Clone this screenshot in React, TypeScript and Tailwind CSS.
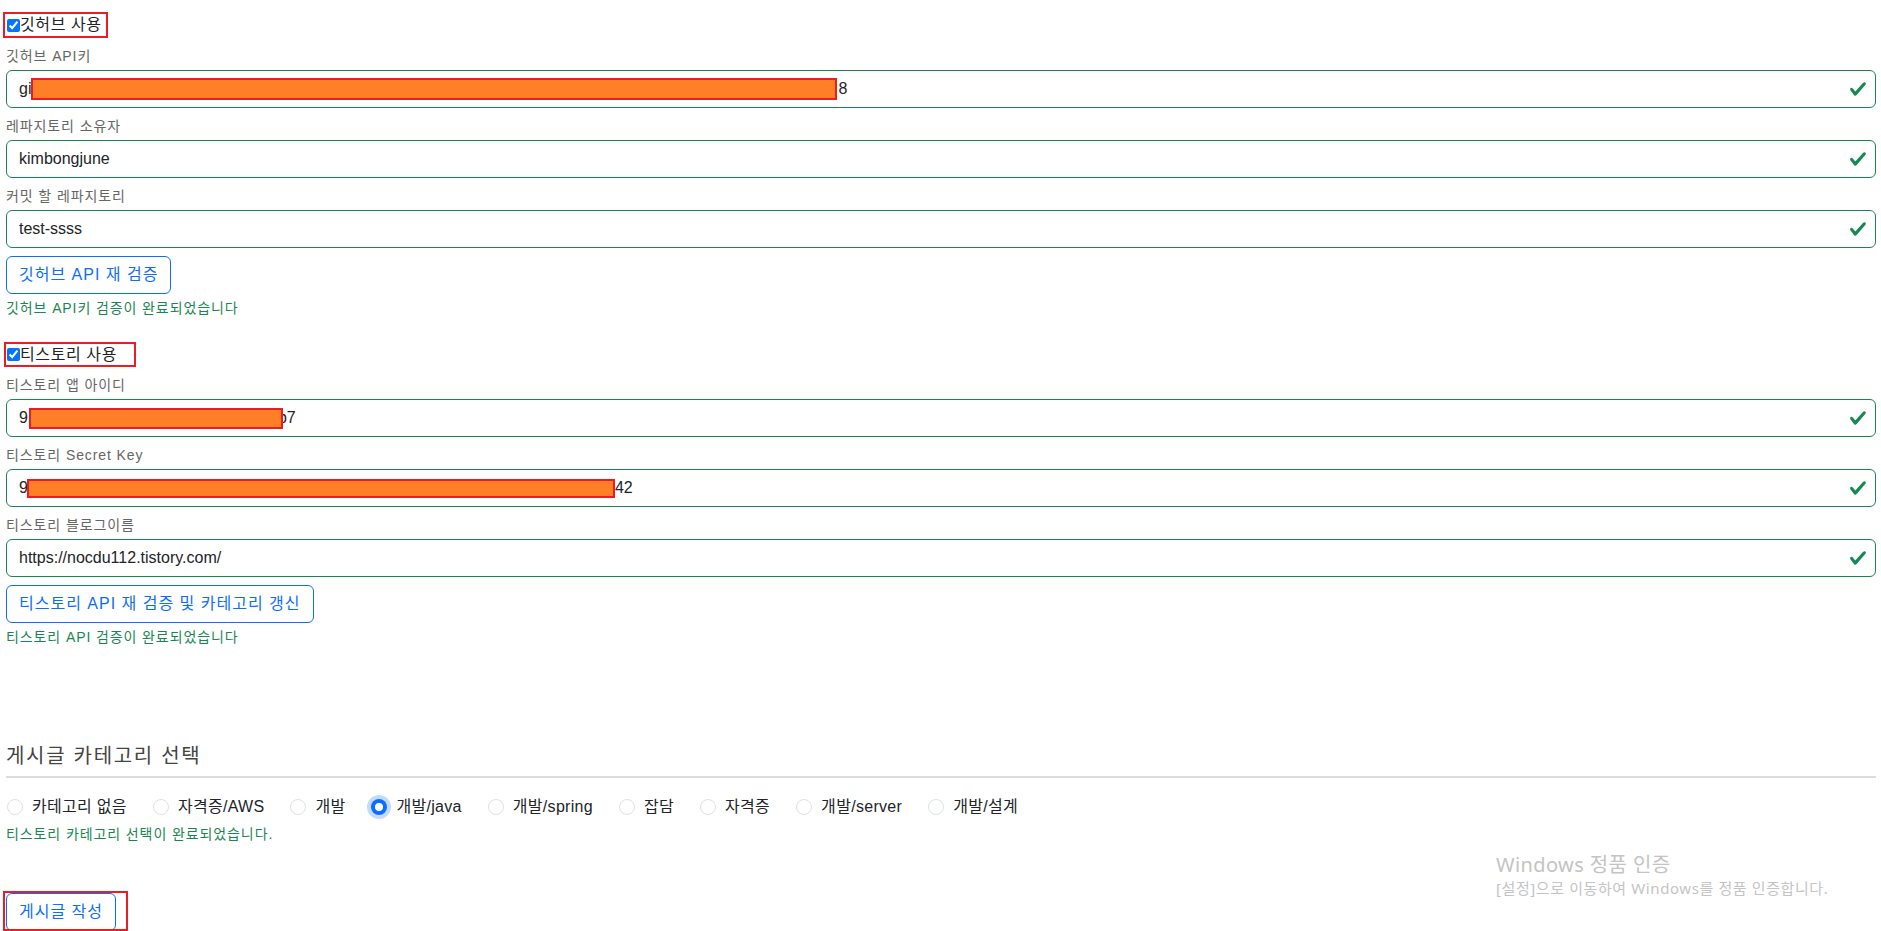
import React from "react";

const CheckIcon = () => (
  <svg viewBox="0 0 8 8" className="w-[18px] h-[18px] shrink-0">
    <path
      fill="#198754"
      d="M2.3 6.73.6 4.53c-.4-1.04.46-1.4 1.1-.8l1.1 1.4 3.4-3.8c.6-.63 1.6-.27 1.2.7l-4 4.6c-.43.5-.8.4-1.1.1z"
    />
  </svg>
);

// orange paint box used to hide secrets in the screenshot
const Redact = ({ className }: { className: string }) => (
  <span className={`relative z-10 inline-block shrink-0 bg-[#ff7f27] border-2 border-[#ed1c24] ${className}`} />
);

const Field = ({ label, children }: { label: React.ReactNode; children: React.ReactNode }) => (
  <div className="mt-[8px]">
    <div className="text-[14px] leading-[21px] tracking-[0.9px] text-[#666]">{label}</div>
    <div className="mt-[3px] h-[38px] flex items-center pl-[12px] pr-[8px] border border-[#198754] rounded-[6px] text-[16px] text-[#212529] bg-white">
      <div className="flex-1 flex items-center whitespace-nowrap">{children}</div>
      <CheckIcon />
    </div>
  </div>
);

const OutlineButton = ({ children }: { children: React.ReactNode }) => (
  <button className="h-[38px] px-[12px] border border-[#0d6efd] text-[#0d6efd] rounded-[6px] text-[16px] tracking-[1px] bg-white whitespace-nowrap">
    {children}
  </button>
);

const Feedback = ({ children, className = "" }: { children: React.ReactNode; className?: string }) => (
  <div className={`text-[14px] leading-[21px] tracking-[0.9px] text-[#198754] ${className}`}>{children}</div>
);

const categories = [
  "카테고리 없음",
  "자격증/AWS",
  "개발",
  "개발/java",
  "개발/spring",
  "잡담",
  "자격증",
  "개발/server",
  "개발/설계",
];

export default function App() {
  return (
    <div className="relative h-screen overflow-hidden bg-white pl-[6px] pr-[5px] pt-[12px] font-['Liberation_Sans','Noto_Sans_CJK_KR',sans-serif] text-[#212529]">
      {/* GitHub */}
      <label className="ml-[-3px] flex items-center w-[105px] h-[26px] border-2 border-[#ed1c24] text-[16px] tracking-[0.6px]">
        <input type="checkbox" checked readOnly className="m-0 ml-[2px] w-[13px] h-[13px]" />
        <span className="leading-[22px]">깃허브 사용</span>
      </label>

      <Field label="깃허브 API키">
        <span>gi</span>
        <Redact className="w-[806px] h-[22px]" />
        <span className="ml-[1px]">8</span>
      </Field>
      <Field label="레파지토리 소유자">kimbongjune</Field>
      <Field label="커밋 할 레파지토리">test-ssss</Field>

      <div className="mt-[8px]">
        <OutlineButton>깃허브 API 재 검증</OutlineButton>
      </div>
      <Feedback className="mt-[4px]">깃허브 API키 검증이 완료되었습니다</Feedback>

      {/* Tistory */}
      <label className="mt-[23px] ml-[-2px] flex items-center w-[132px] h-[25px] border-2 border-[#ed1c24] text-[16px] tracking-[0.6px]">
        <input type="checkbox" checked readOnly className="m-0 ml-[1px] w-[13px] h-[13px]" />
        <span className="leading-[21px]">티스토리 사용</span>
      </label>

      <Field label="티스토리 앱 아이디">
        <span>9</span>
        <Redact className="ml-[1px] w-[254px] h-[21px]" />
        <span className="ml-[-5px]">b7</span>
      </Field>
      <Field label="티스토리 Secret Key">
        <span>9</span>
        <Redact className="ml-[-1px] w-[588px] h-[19px]" />
        <span>42</span>
      </Field>
      <Field label="티스토리 블로그이름">https://nocdu112.tistory.com/</Field>

      <div className="mt-[8px]">
        <OutlineButton>티스토리 API 재 검증 및 카테고리 갱신</OutlineButton>
      </div>
      <Feedback className="mt-[4px]">티스토리 API 검증이 완료되었습니다</Feedback>

      {/* Category */}
      <h5 className="mt-[96px] text-[20px] leading-[24px] tracking-[1.7px] text-[#444]">게시글 카테고리 선택</h5>
      <div className="mt-[8px] h-[2px] bg-[#dcdcdc]" />

      <div className="mt-[17px] h-[24px] pl-[1px] flex items-center">
        {categories.map((c, i) => (
          <label key={c} className="flex items-center mr-[26px] text-[16px] leading-[24px] tracking-[0.3px] text-[#212529]">
            {i === 3 ? (
              <span className="w-4 h-4 rounded-full bg-[#0d6efd] flex items-center justify-center shadow-[0_0_0_4px_rgba(13,110,253,0.25)]">
                <span className="w-2 h-2 rounded-full bg-white" />
              </span>
            ) : (
              <span className="w-4 h-4 rounded-full border border-[#dee2e6] bg-white" />
            )}
            <span className="ml-[9px]">{c}</span>
          </label>
        ))}
      </div>
      <Feedback className="mt-[5px]">티스토리 카테고리 선택이 완료되었습니다.</Feedback>

      <div className="relative mt-[46px] ml-[-3px] w-[125px] h-[40px] pl-[3px] pt-[2px]">
        <OutlineButton>게시글 작성</OutlineButton>
        <span className="absolute inset-0 border-2 border-[#ed1c24] pointer-events-none" />
      </div>

      {/* Windows activation watermark */}
      <div className="absolute left-[1496px] top-[852px] text-[#c4c4c4] font-['Noto_Sans','Noto_Sans_CJK_KR',sans-serif] pointer-events-none">
        <div className="text-[20px] leading-[26px] tracking-[0.4px]">Windows 정품 인증</div>
        <div className="text-[15px] leading-[20px] tracking-[0.6px]">[설정]으로 이동하여 Windows를 정품 인증합니다.</div>
      </div>
    </div>
  );
}
